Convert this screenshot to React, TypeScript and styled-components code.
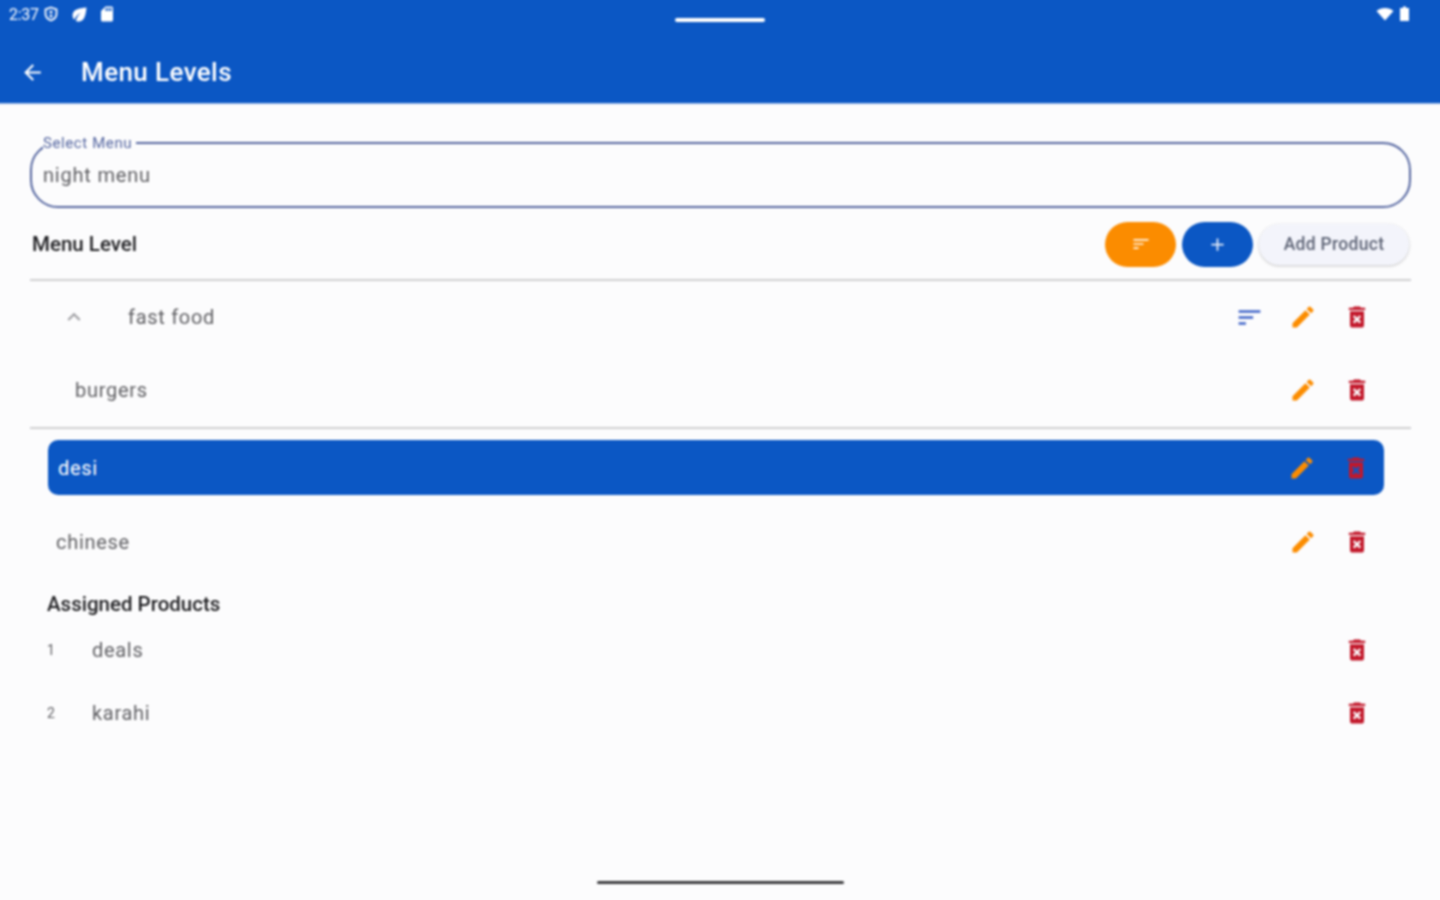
import styled, { createGlobalStyle } from "styled-components"
import { MdAdd, MdArrowBack, MdDeleteForever, MdEco, MdEdit, MdExpandLess, MdSdCard, MdSort } from "react-icons/md"

const colors = {
    primary: "#0b57c4",
    orange: "#fb8c00",
    red: "#c2182b",
    page: "#fcfcfd",
    line: "#cfcfd2",
    text: "#5f5f63",
    dark: "#1f1f22",
}

const GlobalStyle = createGlobalStyle`
html, body {
    margin: 0;
    height: 900px;
    overflow: hidden;
    background: ${colors.page};
    font-family: Roboto, "Noto Sans", sans-serif;
}
`

/* the blur would fade the window edges, so the page bleeds 4px past them */
const Page = styled.div`
height: 908px;
margin: -4px;
display: flex;
flex-direction: column;
overflow: hidden;
filter: blur(0.8px);
`

const Header = styled.header`
height: 107px;
flex: none;
padding-top: 4px;
box-sizing: border-box;
background: ${colors.primary};
color: #fff;
box-shadow: 0 1px 1px rgba(11, 87, 196, 0.35);
`

const StatusBar = styled.div`
height: 40px;
display: grid;
grid-template-columns: 1fr auto 1fr;
padding: 0 13px;
`

const StatusLeft = styled.div`
height: 28px;
display: flex;
align-items: center;
gap: 6px;
font-size: 16px;
letter-spacing: -0.3px;
`

const StatusRight = styled.div`
height: 28px;
display: flex;
align-items: center;
justify-content: flex-end;
gap: 5px;
padding-right: 21px;
`

const Handle = styled.div`
width: 90px;
height: 4px;
margin-top: 18px;
border-radius: 2px;
background: #fff;
`

const Toolbar = styled.div`
height: 63px;
display: flex;
align-items: center;
gap: 36px;
padding: 1px 0 0 24px;
box-sizing: border-box;
`

const Title = styled.h1`
margin: 0;
font-size: 26px;
font-weight: 500;
letter-spacing: 0.4px;
`

const Content = styled.main`
flex: 1;
display: flex;
flex-direction: column;
padding: 32px 33px 0 34px;
`

const Field = styled.fieldset`
margin: 0;
height: 73px;
box-sizing: border-box;
padding: 0 11px;
border: 2px solid #5566a0;
border-radius: 28px;
min-width: 0;
`

const FieldLabel = styled.legend`
padding: 0 4px 0 0;
font-size: 15px;
line-height: 16px;
letter-spacing: 0.6px;
color: #5566a0;
`

const FieldValue = styled.div`
font-size: 20px;
line-height: 30px;
margin-top: 9px;
letter-spacing: 0.8px;
color: ${colors.text};
`

const LevelBar = styled.div`
height: 73px;
box-sizing: border-box;
display: flex;
align-items: center;
justify-content: space-between;
padding: 1px 2px 0;
border-bottom: 2px solid ${colors.line};
`

const SectionTitle = styled.h2<{ $inset?: number; $spaced?: boolean }>`
margin: ${(p) => (p.$spaced ? "4px 0 3px" : "0")};
padding-left: ${(p) => p.$inset ?? 0}px;
font-size: 20.5px;
font-weight: 500;
line-height: 22px;
color: ${colors.dark};
`

const Actions = styled.div`
display: flex;
align-items: center;
gap: 6px;
`

const PillButton = styled.button<{ $bg: string }>`
width: 71px;
height: 45px;
display: flex;
align-items: center;
justify-content: center;
padding: 0;
border: 0;
border-radius: 23px;
background: ${(p) => p.$bg};
color: rgba(255, 255, 255, 0.9);
`

const AddProduct = styled.button`
width: 150px;
height: 41px;
padding: 0;
border: 0;
border-radius: 21px;
background: #f3f4fb;
box-shadow: 0 1px 3px rgba(0, 0, 0, 0.22);
font: 500 17.5px Roboto, sans-serif;
letter-spacing: 0.3px;
color: #5d6375;
`

const Row = styled.div<{ $height: number; $inset: number }>`
height: ${(p) => p.$height}px;
display: flex;
align-items: center;
padding: 0 27px 0 ${(p) => p.$inset}px;
font-size: 20px;
letter-spacing: 0.7px;
color: ${colors.text};
`

const RowDivider = styled.div`
height: 2px;
margin-top: 1px;
background: ${colors.line};
`

const SelectedRow = styled(Row)`
margin: 11px 27px 0 18px;
padding: 0 1px 0 10px;
border-radius: 10px;
background: ${colors.primary};
color: #fff;
`

const Chevron = styled.span`
width: 67px;
margin-left: -1px;
display: flex;
color: #a0a0a4;
`

const Label = styled.span`
flex: 1;
`

const Index = styled.span`
width: 45px;
font-size: 14px;
letter-spacing: 0;
`

const IconSlot = styled.span<{ $color: string }>`
width: 54px;
display: flex;
justify-content: center;
color: ${(p) => p.$color};
`

const HomeBar = styled.div`
width: 247px;
height: 3px;
margin: auto auto 20px;
background: #3b3b3e;
border-radius: 2px;
`

const RowIcons = ({ sort }: { sort?: boolean }) => (
    <>
        {sort && <IconSlot $color="#3f63c8"><MdSort size={29} /></IconSlot>}
        <IconSlot $color={colors.orange}><MdEdit size={28} /></IconSlot>
        <IconSlot $color={colors.red}><MdDeleteForever size={28} /></IconSlot>
    </>
)

export default function App() {
    return (
        <Page>
            <GlobalStyle />
            <Header>
                <StatusBar>
                    <StatusLeft>
                        <span>2:37</span>
                        <svg width="16" height="16" viewBox="0 0 16 16" fill="none" style={{ marginLeft: -2 }}>
                            <path d="M8 1.500 13.500 3.500V8c0 3-2.500 5.300-5.500 6.500C5 13.300 2.500 11 2.500 8V3.500Z" stroke="#fff" strokeWidth="1.800" />
                            <circle cx="8" cy="6" r="1.500" fill="#fff" />
                            <circle cx="8" cy="10" r="1.500" fill="#fff" />
                        </svg>
                        <MdEco size={21} style={{ marginLeft: 4 }} />
                        <MdSdCard size={18} style={{ marginLeft: 2 }} />
                    </StatusLeft>
                    <Handle />
                    <StatusRight>
                        <svg width="18" height="14" viewBox="0 0 18 14"><path d="M0.500 4C5 0 13 0 17.500 4L9 13.500Z" fill="#fff" /></svg>
                        <svg width="11" height="16" viewBox="0 0 11 16"><path d="M4 0.500H7V2H10V15H1V2H4Z" fill="#fff" /></svg>
                    </StatusRight>
                </StatusBar>
                <Toolbar>
                    <MdArrowBack size={25} />
                    <Title>Menu Levels</Title>
                </Toolbar>
            </Header>
            <Content>
                <Field>
                    <FieldLabel>Select Menu</FieldLabel>
                    <FieldValue>night menu</FieldValue>
                </Field>
                <LevelBar>
                    <SectionTitle>Menu Level</SectionTitle>
                    <Actions>
                        <PillButton $bg={colors.orange}><MdSort size={20} /></PillButton>
                        <PillButton $bg={colors.primary}><MdAdd size={21} /></PillButton>
                        <AddProduct>Add Product</AddProduct>
                    </Actions>
                </LevelBar>
                <Row $height={72} $inset={32}>
                    <Chevron><MdExpandLess size={26} /></Chevron>
                    <Label>fast food</Label>
                    <RowIcons sort />
                </Row>
                <Row $height={73} $inset={45}>
                    <Label>burgers</Label>
                    <RowIcons />
                </Row>
                <RowDivider />
                <SelectedRow $height={55} $inset={10}>
                    <Label>desi</Label>
                    <RowIcons />
                </SelectedRow>
                <Row $height={94} $inset={26}>
                    <Label>chinese</Label>
                    <RowIcons />
                </Row>
                <SectionTitle $inset={17} $spaced>Assigned Products</SectionTitle>
                <Row $height={63} $inset={17}>
                    <Index>1</Index>
                    <Label>deals</Label>
                    <IconSlot $color={colors.red}><MdDeleteForever size={28} /></IconSlot>
                </Row>
                <Row $height={63} $inset={17}>
                    <Index>2</Index>
                    <Label>karahi</Label>
                    <IconSlot $color={colors.red}><MdDeleteForever size={28} /></IconSlot>
                </Row>
                <HomeBar />
            </Content>
        </Page>
    )
}
